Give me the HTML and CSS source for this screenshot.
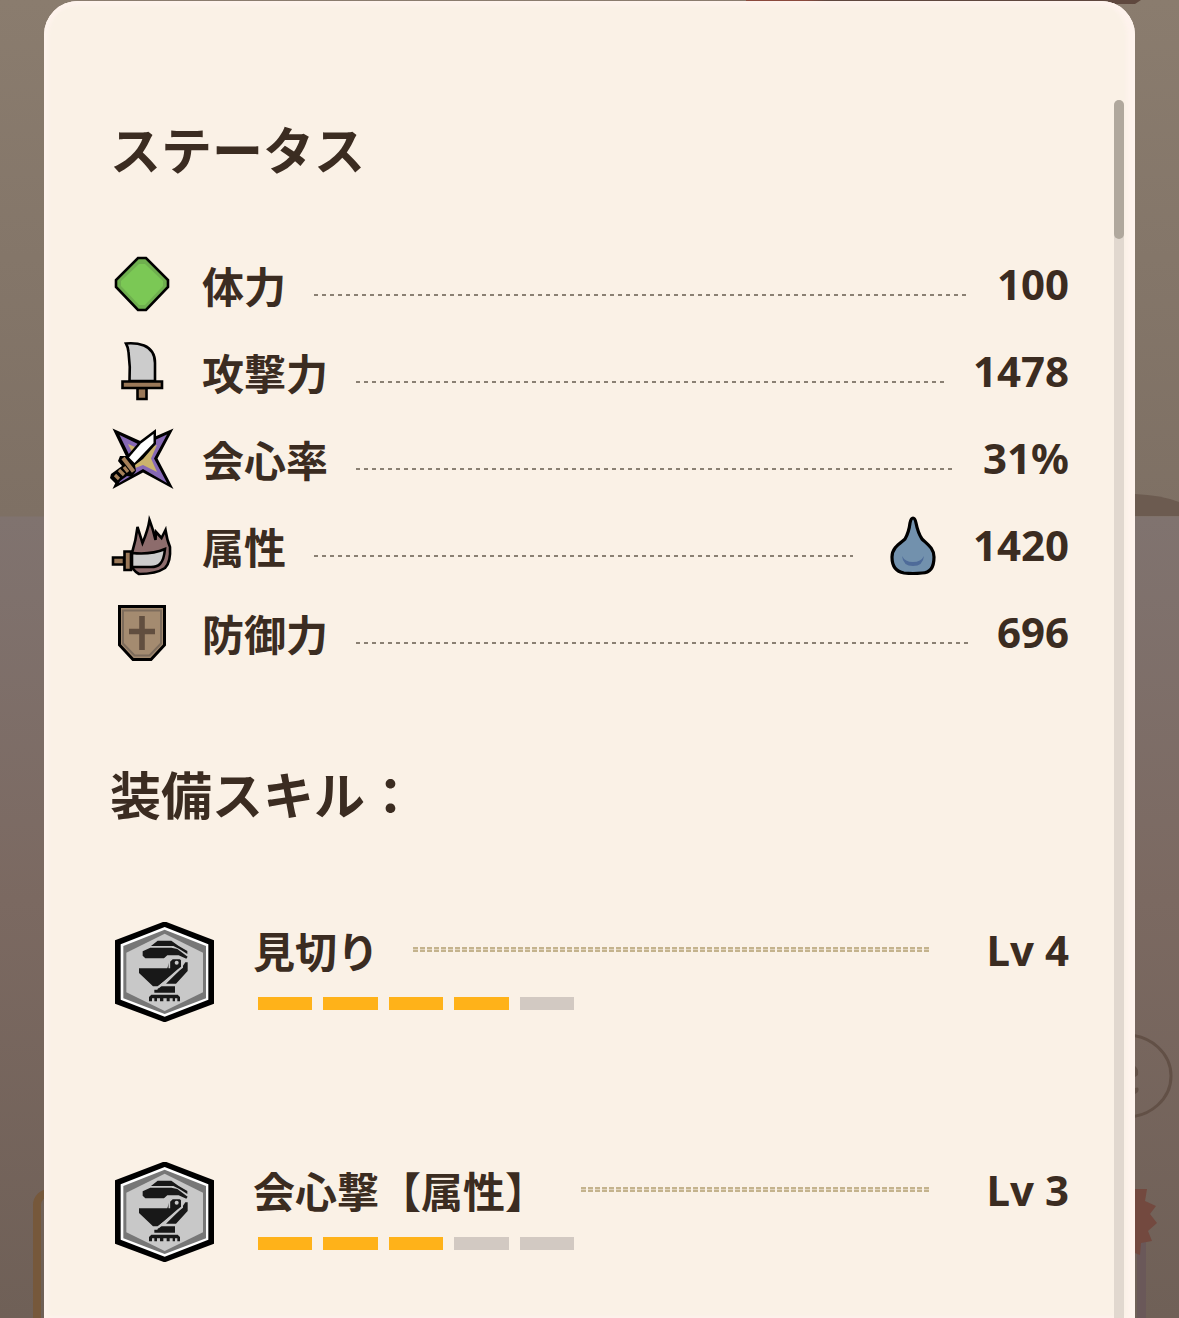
FILE: index.html
```html
<!DOCTYPE html>
<html lang="ja">
<head>
<meta charset="UTF-8" />
<meta name="viewport" content="width=device-width, initial-scale=1"/>
<title>ステータス</title>
<link rel="stylesheet" href="styles.css">
</head>
<body>
  <div class="backdrop" aria-hidden="true">
    <div class="ridge"></div>
    <div class="frame"></div>
    <svg class="scenery" width="44" height="1318" viewBox="0 0 44 1318">
      <path d="M0 0H6L0 4Z" fill="#5f483e"/>
      <path d="M0 494Q26 495 44 502V516H0Z" fill="#6c5b50"/>
      <rect x="2" y="1240" width="9" height="78" fill="#6a5859"/>
      <path d="M0 1189L12 1189L10 1201L21 1206L15 1214L22 1223L13 1231L17 1241L6 1243L5 1255L0 1253Z" fill="#73493f"/>
      <ellipse cx="-9" cy="1076" rx="45" ry="41" fill="none" stroke="#625046" stroke-width="3"/>
      <path d="M0 1066Q4 1069 3 1075L0 1077ZM0 1088Q5 1086 3 1092L0 1094Z" fill="#625046"/>
    </svg>
  </div>

  <main class="panel">
    <div class="content">
      <h2>ステータス</h2>
      <ul class="stats">
        <li class="stat">
          <svg class="icon" viewBox="0 0 64 64">
            <path d="M28 6H36L58 28V35L36 58H28L6 35V28Z" fill="#6faf4f" stroke="#000" stroke-width="2.6"/>
            <path d="M29 12H35L53 29V34L35 53H29L11 34V29Z" fill="#7bc855"/>
          </svg>
          <span class="name">体力</span>
          <span class="dots"></span>
          <span class="value">100</span>
        </li>
        <li class="stat">
          <svg class="icon" viewBox="0 0 64 64" stroke="#000" stroke-width="2.6">
            <path d="M16 4.5Q26 3.5 34 6.5Q45 11 45 24V42H19.500Q20.500 28 18.500 13Q18 8 16 4.500Z" fill="#ccc"/>
            <path d="M27.500 49H36.500V60H27.500Z" fill="#9a7858"/>
            <path d="M12.500 42.500H52V49H12.500Z" fill="#9a7858"/>
          </svg>
          <span class="name">攻撃力</span>
          <span class="dots"></span>
          <span class="value">1478</span>
        </li>
        <li class="stat">
          <svg class="icon" viewBox="0 0 64 64">
            <path d="M2.500 2.500L32.500 16L63.500 2.500L47.500 32.500L63.500 63L33 46.500L2.500 63L17 32.500Z" fill="#000"/>
            <path d="M9.500 9L32 20L57 8.500L44 32.500L57 57L33 43L9 57L21 32.500Z" fill="#8668b5"/>
            <path d="M18 18L32 24L47 19L41 32.500L47 46L33 39L20 44L25 32Z" fill="#cbb36c"/>
            <path d="M46 3L30 15L17 30L10 30L8 35L12 40L1 48L0 52L6 58L17 50L22 51L26 45L25 39L33 33L46 18Z" fill="#000"/>
            <path d="M43.500 8L31 17.500L19 31.500L24.500 37L43.500 17Z" fill="#fff"/>
            <path d="M13 32L23.500 45.500" stroke="#a68059" stroke-width="4"/>
            <path d="M14 41L18 46M9 44L14 49M5 49L9 53" stroke="#a68059" stroke-width="3.200"/>
          </svg>
          <span class="name">会心率</span>
          <span class="dots"></span>
          <span class="value">31%</span>
        </li>
        <li class="stat">
          <svg class="icon" viewBox="0 0 64 64" stroke="#000" stroke-width="2.600">
            <path d="M22 40Q26 27 27.500 14L32.500 30Q38 17 39.500 7Q43 16 45.500 27L46 19L51.500 25L55.500 17Q57 27 60 34Q61 49 55 55Q46 61 29 61Q22 57 22 52Z" fill="#8d6c6c"/>
            <path d="M22 40Q41 42 55 36Q54 47 50 51Q47 54 41 54H22Z" fill="#ccc"/>
            <path d="M3 44.500H14V51.500H3Z" fill="#9a7858"/>
            <path d="M14.500 38.500H21V57H14.500Z" fill="#9a7858"/>
          </svg>
          <span class="name">属性</span>
          <span class="dots"></span>
          <svg class="icon" viewBox="0 0 64 64" role="img" aria-label="水属性">
            <path d="M32 5Q34 5 35 10Q37 20 41 26C46 31 53 35 53 44Q53 60 41 60Q32 61 23 60Q11 58 11 44C11 35 18 31 24 26Q28 19 29 10Q30 5 32 5Z" fill="#7291ad" stroke="#000" stroke-width="3.200"/>
            <path d="M21 43Q22 53 32 53Q42 53 43 43Q40 49 32 49Q24 49 21 43Z" fill="#4e6b99"/>
          </svg>
          <span class="value">1420</span>
        </li>
        <li class="stat">
          <svg class="icon" viewBox="0 0 64 64">
            <path d="M9.500 6.500H54.500V45L41 59.500H23L9.500 45Z" fill="#a48b70" stroke="#000" stroke-width="3"/>
            <path d="M13 10.500H51V43.500L39.500 55.500H24.500L13 43.500Z" fill="none" stroke="#7d6c5c" stroke-width="2"/>
            <path d="M32 16V50M19 31.500H45" stroke="#614e3f" stroke-width="5.600"/>
          </svg>
          <span class="name">防御力</span>
          <span class="dots"></span>
          <span class="value">696</span>
        </li>
      </ul>

      <h2>装備スキル：</h2>
      <ul class="skills">
        <li class="skill">
          <svg class="badge" viewBox="45 35 300 300">
            <defs>
              <g id="skill-badge">
                <path d="M194 33L342 90V280L194 336L45 280V90Z" fill="#000"/>
                <path d="M194 50L325 102V268L194 319L62 268V102Z" fill="#fff"/>
                <path d="M194 58L318 107V264L194 311L70 264V107Z" fill="#777"/>
                <path d="M194 70L309 127V246L194 302L79 246V127Z" fill="#c8c8c8"/>
                <g fill="#181818">
                  <path d="M153 107L173 91H214L235 106L262 122V131L238 116L220 107Z"/>
                  <path d="M128 123L151 112H214L232 116L263 139L259 145L236 135H202L192 144H136L128 136Z"/>
                  <path d="M117 174H202L209 151L216 144H237L244 151V170L235 180L173 228H159L117 188Z"/>
                  <path d="M256 156L263 156V182L228 220H198L242 177Z"/>
                  <path d="M177 228H225V247H163V238H172Z"/>
                  <path d="M154 253H233L240 260V273H232V264H225V273H218V264H209V273H200V264H190V273H180V264H171V273H163V264H156V273H147V260Z"/>
                </g>
                <path d="M174 232L235 179L246 171V150" fill="none" stroke="#c8c8c8" stroke-width="6"/>
                <path d="M208 174V153L217 144H240" fill="none" stroke="#c8c8c8" stroke-width="5"/>
                <circle cx="230" cy="157" r="6" fill="#c8c8c8"/>
              </g>
            </defs>
            <use href="#skill-badge"/>
          </svg>
          <div class="detail">
            <div class="title">
              <h3>見切り</h3>
              <span class="chain"></span>
              <span class="value">Lv 4</span>
            </div>
            <div class="pips" role="img" aria-label="4 / 5">
              <i class="on"></i><i class="on"></i><i class="on"></i><i class="on"></i><i></i>
            </div>
          </div>
        </li>
        <li class="skill">
          <svg class="badge" viewBox="45 35 300 300"><use href="#skill-badge"/></svg>
          <div class="detail">
            <div class="title">
              <h3>会心撃【属性】</h3>
              <span class="chain"></span>
              <span class="value">Lv 3</span>
            </div>
            <div class="pips" role="img" aria-label="3 / 5">
              <i class="on"></i><i class="on"></i><i class="on"></i><i></i><i></i>
            </div>
          </div>
        </li>
      </ul>
    </div>
    <div class="scrollbar" aria-hidden="true"><div class="thumb"></div></div>
  </main>
</body>
</html>
```
FILE: styles.css
```css
* {
  box-sizing: border-box;
}
body {
  margin: 0;
  height: 100vh;
  overflow: hidden;
  display: flex;
  padding: 1px 44px 0;
  font-family: "Noto Sans", "Noto Sans CJK JP", sans-serif;
  font-weight: 700;
  color: #3b2c21;
}
h2, h3, ul {
  margin: 0;
  padding: 0;
  list-style: none;
}
h2, h3, .name {
  font-family: "Noto Sans CJK JP", sans-serif;
  font-weight: 700;
}

/* Dimmed page behind the sheet */
.backdrop {
  position: absolute;
  inset: 0;
  z-index: -1;
  overflow: hidden;
  background: linear-gradient(#8a7c6e, #7e7064 516px, #80736f 517px, #7b6961 900px, #6f6057);
}
.ridge {
  width: 33%;
  height: 4px;
  margin-left: auto;
  margin-right: 44px;
  background: linear-gradient(90deg, #8a4a3c 60px, #5f483e 80px);
}
.frame {
  position: absolute;
  left: 33px;
  top: 1189px;
  width: 60px;
  height: 200px;
  border: 8px solid #76583b;
  border-radius: 16px;
}
.scenery {
  position: absolute;
  top: 0;
  right: 0;
}

.panel {
  flex: 1;
  display: flex;
  padding-left: 66px;
  padding-right: 11px;
  background: #faf1e6;
  border-radius: 34px 34px 0 0;
  box-shadow: inset 0 4px 4px #fef3ed, inset 4px 0 4px #fef3ed, inset -8px 0 4px #fef3ed;
}
.content {
  flex: 1;
  padding-top: 115px;
}
.scrollbar {
  width: 10px;
  margin-left: 45px;
  margin-top: 99px;
  background: #e1d8cf;
  border-radius: 5px 5px 0 0;
}
.thumb {
  height: 139px;
  background: #b0a89d;
  border-radius: 5px;
}

h2 {
  font-size: 51px;
  line-height: 64px;
}

/* Status list */
.stats {
  display: flex;
  flex-direction: column;
  gap: 23px;
  margin: 72px 0 97px;
}
.stat {
  display: flex;
  align-items: center;
  gap: 28px;
  height: 64px;
  font-size: 42px;
  line-height: 64px;
}
.name {
  padding-top: 2px;
}
.icon {
  width: 64px;
  height: 64px;
  flex: none;
}
.dots {
  flex: 1;
  height: 2px;
  margin-top: 22px;
  background: repeating-linear-gradient(90deg, #8a8073 0 4px, transparent 4px 8px);
}

/* Skill list */
.skills {
  display: flex;
  flex-direction: column;
  gap: 140px;
  margin-top: 97px;
}
.skill {
  display: flex;
  gap: 38px;
  padding-left: 5px;
}
.badge {
  width: 100px;
  height: 100px;
  flex: none;
}
.detail {
  flex: 1;
}
.title {
  display: flex;
  align-items: center;
  font-size: 42px;
  line-height: 56px;
}
h3 {
  font-size: 42px;
}
.chain {
  flex: 1;
  height: 5px;
  margin: 0 57px 2px 34px;
  background:
    linear-gradient(transparent 2px, #faf1e688 2px 3px, transparent 3px),
    repeating-linear-gradient(90deg, #c4b38d 0 5px, transparent 5px 7px);
}
.pips {
  display: flex;
  gap: 11px;
  width: 316px;
  margin: 19px 0 0 5px;
}
.pips i {
  flex: 1;
  height: 13px;
  background: #d2c9c2;
}
.pips .on {
  background: #ffb219;
}
```
